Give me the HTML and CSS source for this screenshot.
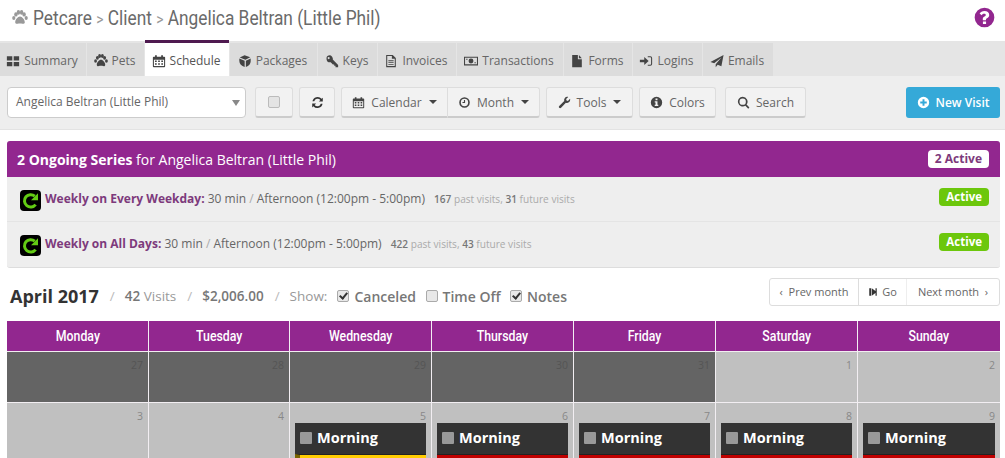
FILE: index.html
```html
<!DOCTYPE html>
<html lang="en">
<head>
    <meta charset="UTF-8">
    <meta name="viewport" content="width=device-width, initial-scale=1.0">
    <title>Petcare - Client Schedule</title>
    <link rel="stylesheet" href="styles.css">
</head>
<body>
    <svg class="sprite" width="0" height="0">
        <symbol id="i-paw" viewBox="0 0 16 16"><ellipse cx="3.9" cy="4.4" rx="1.7" ry="2.2"/><ellipse cx="12.1" cy="4.4" rx="1.7" ry="2.2"/><ellipse cx="6.4" cy="2.4" rx="1.7" ry="2.3"/><ellipse cx="9.6" cy="2.4" rx="1.7" ry="2.3"/><ellipse cx="1.8" cy="8" rx="1.6" ry="2"/><ellipse cx="14.200" cy="8" rx="1.6" ry="2"/><path d="M8 6.600c2.200 0 4.800 3.200 4.800 5.600 0 1.600-1.400 1.800-2.400 1.600-.8-.2-1.600-.4-2.400-.4s-1.600.2-2.400.4c-1 .2-2.400 0-2.400-1.600 0-2.400 2.600-5.600 4.800-5.600z"/></symbol>
        <symbol id="i-grid" viewBox="0 0 16 16"><path d="M1 2.500h6.200v5H1zM8.800 2.500H15v5H8.800zM1 9h6.200v5H1zM8.800 9H15v5H8.800z"/></symbol>
        <symbol id="i-cal" viewBox="0 0 16 16"><path fill-rule="evenodd" d="M2 3h1.500V1.500h2V3h5V1.500h2V3H14a1 1 0 0 1 1 1v10a1 1 0 0 1-1 1H2a1 1 0 0 1-1-1V4a1 1 0 0 1 1-1zm.200 3.500v7.300h11.600V6.500zM3.400 7.500h2v1.600h-2zM7 7.500h2v1.600H7zm3.600 0h2v1.600h-2zM3.400 10.500h2v1.800h-2zm3.600 0h2v1.800H7zm3.600 0h2v1.800h-2z"/></symbol>
        <symbol id="i-cube" viewBox="0 0 16 16"><path d="M7.500 1.500 14 3.800 8.500 6.500 2 4zM1.500 5.200 7.600 7.600V14.800C4 13.800 1.500 11.500 1.500 8zM9 7.600 14.500 5v3.200C14.500 11 12.500 13.600 9 14.800z"/></symbol>
        <symbol id="i-key" viewBox="0 0 16 16"><path fill-rule="evenodd" d="M5 1.500a4 4 0 0 1 3.900 4.900L15 12.500V15h-3v-1.500h-1.500V12H9L6.500 9.400A4 4 0 1 1 5 1.500zm-.800 2a1.200 1.200 0 1 0 0 2.400 1.200 1.200 0 0 0 0-2.400z"/></symbol>
        <symbol id="i-file-o" viewBox="0 0 16 16"><path fill-rule="evenodd" d="M2.500 1H10l3.500 3.500V15h-11zm1.200 1.200v11.600h8.600V5.500H9V2.200zM5 7.200h6v1H5zm0 2.200h6v1H5zm0 2.200h6v1H5z"/></symbol>
        <symbol id="i-money" viewBox="0 0 16 16"><path fill-rule="evenodd" d="M0 3h16v10H0zm1.200 1.200v7.600h13.600V4.200zM8 5.200a2.800 2.800 0 1 1 0 5.600 2.800 2.800 0 0 1 0-5.600zM2.500 5.500h1.500v1H2.500zm9.500 4h1.500v1H12z"/></symbol>
        <symbol id="i-file" viewBox="0 0 16 16"><path d="M2.500 1H9v5h4.500v9h-11zM10.200 1l3.300 3.800h-3.300z"/></symbol>
        <symbol id="i-login" viewBox="0 0 16 16"><path d="M1 6.500h5V3.500L11 8l-5 4.500v-3H1zM10 2.500h3a2 2 0 0 1 2 2v7a2 2 0 0 1-2 2h-3v-1.300h2.800a1 1 0 0 0 1-1V4.800a1 1 0 0 0-1-1H10z"/></symbol>
        <symbol id="i-send" viewBox="0 0 16 16"><path d="M15.500 1 13 14 8.800 12.300 6.500 15V11.800L13 4 4.800 10.700.5 9z"/></symbol>
        <symbol id="i-refresh" viewBox="0 0 16 16"><path d="M14.500 2v4.800H9.700l1.800-1.800A4.300 4.300 0 0 0 4 6.500H1.800A6.400 6.400 0 0 1 13 3.500zM1.500 14V9.200h4.800l-1.800 1.800A4.300 4.300 0 0 0 12 9.500h2.200A6.400 6.400 0 0 1 3 12.500z"/></symbol>
        <symbol id="i-clock" viewBox="0 0 16 16"><path fill-rule="evenodd" d="M8 1.500a6.500 6.500 0 1 1 0 13 6.500 6.500 0 0 1 0-13zm0 2a4.500 4.500 0 1 0 0 9 4.500 4.500 0 0 0 0-9zM7.300 5h1.400v3.700H5.500V7.500h1.800z"/></symbol>
        <symbol id="i-wrench" viewBox="0 0 16 16"><path d="M15 4.500a4 4 0 0 1-5.300 3.800L3.800 14.500a1.500 1.500 0 0 1-2.300-2.300L7.700 6.300A4 4 0 0 1 11.500 1c.4 0 .8 0 1.100.2L10 3.800l.5 1.700 1.700.5 2.600-2.600c.1.300.2.700.2 1.100z"/></symbol>
        <symbol id="i-info" viewBox="0 0 16 16"><path fill-rule="evenodd" d="M8 1a7 7 0 1 1 0 14A7 7 0 0 1 8 1zM6.800 3.200v2h2.400v-2zM5.800 6.500v1.400h1v2.900h-1v1.400h4.400v-1.400h-1V6.500z"/></symbol>
        <symbol id="i-search" viewBox="0 0 16 16"><path fill-rule="evenodd" d="M7 1a6 6 0 0 1 4.800 9.600l3.500 3.500-1.500 1.500-3.500-3.500A6 6 0 1 1 7 1zm0 2.100a3.900 3.900 0 1 0 0 7.800 3.900 3.900 0 0 0 0-7.800z"/></symbol>
        <symbol id="i-plus" viewBox="0 0 16 16"><path fill-rule="evenodd" d="M8 1a7 7 0 1 1 0 14A7 7 0 0 1 8 1zM6.800 4v2.800H4v2.400h2.800V12h2.400V9.200H12V6.800H9.200V4z"/></symbol>
        <symbol id="i-help" viewBox="0 0 16 16"><path fill-rule="evenodd" d="M8 .5a7.500 7.500 0 1 1 0 15 7.500 7.500 0 0 1 0-15zM6.800 11v2h2.400v-2zM8 3C6.300 3 5 3.800 4.300 5l1.500 1.200c.5-.7 1-1.100 1.900-1.100.8 0 1.300.4 1.300 1 0 .5-.4.800-1 1.200-.9.500-1.300 1.100-1.300 2v.7h2.400v-.5c0-.4.200-.6.800-1 .9-.5 1.700-1.200 1.700-2.500C11.600 4.200 10 3 8 3z"/></symbol>
        <symbol id="i-go" viewBox="0 0 16 16"><path d="M2 2h3v12H2zM6 2l8 6-8 6zM12 2h2v12h-2z"/></symbol>
        <symbol id="i-series" viewBox="0 0 21 21"><rect width="21" height="21" rx="4" fill="#000"/><path d="M15.600 14.600A6.200 6.200 0 1 1 14.800 6.200" fill="none" stroke="#63cc14" stroke-width="3"/><path d="M18 3.200V10.200H11z" fill="#63cc14"/></symbol>
    </svg>

    <!-- Title -->
    <header class="title-row">
        <h1 class="title">
            <svg class="title-paw"><use href="#i-paw"/></svg>
            <span class="title-text">Petcare <span class="crumb-sep">&gt;</span> Client <span class="crumb-sep">&gt;</span> Angelica Beltran (Little Phil)</span>
        </h1>
        <svg class="help-icon"><use href="#i-help"/></svg>
    </header>

    <!-- Tabs -->
    <nav class="tabs">
        <a class="tab tab-summary"><svg class="icon"><use href="#i-grid"/></svg>Summary</a>
        <a class="tab tab-pets"><svg class="icon"><use href="#i-paw"/></svg>Pets</a>
        <a class="tab tab-schedule active"><svg class="icon"><use href="#i-cal"/></svg>Schedule</a>
        <a class="tab tab-packages"><svg class="icon"><use href="#i-cube"/></svg>Packages</a>
        <a class="tab tab-keys"><svg class="icon"><use href="#i-key"/></svg>Keys</a>
        <a class="tab tab-invoices"><svg class="icon"><use href="#i-file-o"/></svg>Invoices</a>
        <a class="tab tab-transactions"><svg class="icon"><use href="#i-money"/></svg>Transactions</a>
        <a class="tab tab-forms"><svg class="icon"><use href="#i-file"/></svg>Forms</a>
        <a class="tab tab-logins"><svg class="icon"><use href="#i-login"/></svg>Logins</a>
        <a class="tab tab-emails"><svg class="icon"><use href="#i-send"/></svg>Emails</a>
    </nav>

    <!-- Toolbar -->
    <div class="toolbar">
        <div class="client-select">Angelica Beltran (Little Phil)<span class="select-arrow"></span></div>
        <button class="btn btn-check"><span class="fake-check"></span></button>
        <button class="btn btn-refresh"><svg class="icon dark"><use href="#i-refresh"/></svg></button>
        <div class="btn-group">
            <button class="btn btn-calendar"><svg class="icon"><use href="#i-cal"/></svg>Calendar<span class="caret"></span></button>
            <button class="btn btn-month"><svg class="icon"><use href="#i-clock"/></svg>Month<span class="caret"></span></button>
        </div>
        <button class="btn btn-tools"><svg class="icon"><use href="#i-wrench"/></svg>Tools<span class="caret"></span></button>
        <button class="btn btn-colors"><svg class="icon"><use href="#i-info"/></svg>Colors</button>
        <button class="btn btn-search"><svg class="icon"><use href="#i-search"/></svg>Search</button>
        <button class="btn-new"><svg class="icon"><use href="#i-plus"/></svg>New Visit</button>
    </div>

    <!-- Ongoing series -->
    <section class="series">
        <div class="series-head">
            <div><b>2 Ongoing Series</b> for Angelica Beltran (Little Phil)</div>
            <span class="count-badge">2 Active</span>
        </div>
        <div class="series-row">
            <svg class="series-icon"><use href="#i-series"/></svg>
            <div class="series-text">
                <b>Weekly on Every Weekday:</b> 30 min <i>/</i> Afternoon (12:00pm - 5:00pm)
                <small><b>167</b> past visits, <b>31</b> future visits</small>
            </div>
            <span class="active-badge">Active</span>
        </div>
        <div class="series-row">
            <svg class="series-icon"><use href="#i-series"/></svg>
            <div class="series-text">
                <b>Weekly on All Days:</b> 30 min <i>/</i> Afternoon (12:00pm - 5:00pm)
                <small><b>422</b> past visits, <b>43</b> future visits</small>
            </div>
            <span class="active-badge">Active</span>
        </div>
    </section>

    <!-- Month summary -->
    <div class="month-row">
        <div class="month-info">
            <h2>April 2017</h2>
            <i>/</i>
            <span><b>42</b> Visits</span>
            <i>/</i>
            <b>$2,006.00</b>
            <i>/</i>
            <span>Show:</span>
            <label><span class="check on"></span>Canceled</label>
            <label><span class="check"></span>Time Off</label>
            <label><span class="check on"></span>Notes</label>
        </div>
        <div class="pager">
            <a class="pager-prev">&lsaquo;&nbsp; Prev month</a>
            <a class="pager-go"><svg class="icon dark"><use href="#i-go"/></svg>Go</a>
            <a class="pager-next">Next month &nbsp;&rsaquo;</a>
        </div>
    </div>

    <!-- Calendar -->
    <div class="calendar">
        <div class="dow"><span>Monday</span></div>
        <div class="dow"><span>Tuesday</span></div>
        <div class="dow"><span>Wednesday</span></div>
        <div class="dow"><span>Thursday</span></div>
        <div class="dow"><span>Friday</span></div>
        <div class="dow"><span>Saturday</span></div>
        <div class="dow"><span>Sunday</span></div>

        <div class="day past"><span class="num">27</span></div>
        <div class="day past"><span class="num">28</span></div>
        <div class="day past"><span class="num">29</span></div>
        <div class="day past"><span class="num">30</span></div>
        <div class="day past"><span class="num">31</span></div>
        <div class="day"><span class="num">1</span></div>
        <div class="day"><span class="num">2</span></div>

        <div class="day week2"><span class="num">3</span></div>
        <div class="day week2"><span class="num">4</span></div>
        <div class="day week2"><span class="num">5</span>
            <div class="visit"><div class="visit-head"><span class="visit-check"></span>Morning</div><div class="visit-body yellow"></div></div>
        </div>
        <div class="day week2"><span class="num">6</span>
            <div class="visit"><div class="visit-head"><span class="visit-check"></span>Morning</div><div class="visit-body"></div></div>
        </div>
        <div class="day week2"><span class="num">7</span>
            <div class="visit"><div class="visit-head"><span class="visit-check"></span>Morning</div><div class="visit-body"></div></div>
        </div>
        <div class="day week2"><span class="num">8</span>
            <div class="visit"><div class="visit-head"><span class="visit-check"></span>Morning</div><div class="visit-body"></div></div>
        </div>
        <div class="day week2"><span class="num">9</span>
            <div class="visit"><div class="visit-head"><span class="visit-check"></span>Morning</div><div class="visit-body"></div></div>
        </div>
    </div>
</body>
</html>
```

FILE: styles.css
```css
/* Page */
html, body {
    height: 100%;
    margin: 0;
    overflow: hidden;
}
body {
    background-color: white;
    color: #555;
    font-family: "Open Sans", Arial, sans-serif;
    font-size: 12px;
}
.sprite {
    position: absolute;
}
.icon {
    width: 13px;
    height: 13px;
    margin-right: 6px;
    fill: #444;
    flex: none;
}
.icon.dark {
    fill: #333;
}

/* Title */
.title-row {
    display: flex;
    align-items: center;
    justify-content: space-between;
    height: 35px;
    padding: 0 10px 6px 12px;
}
.title {
    display: flex;
    align-items: center;
    gap: 5px;
    margin: 0;
    color: #6a6a6a;
    font-family: Roboto, sans-serif;
    font-size: 20px;
    font-weight: normal;
    white-space: nowrap;
}
.title-text {
    display: inline-block;
    transform: scaleX(0.865);
    transform-origin: left center;
}
.title-paw {
    width: 16px;
    height: 16px;
    fill: #999;
}
.crumb-sep {
    color: #999;
    font-size: 16px;
}
.help-icon {
    width: 21px;
    height: 21px;
    fill: #92278f;
}

/* Tabs */
.tabs {
    display: flex;
    height: 35px;
    background-color: #e5e5e5;
}
.tab {
    display: flex;
    align-items: center;
    justify-content: center;
    box-sizing: border-box;
    height: 33px;
    margin: 2px 1px 0 0;
    padding: 2px 2px 0 0;
    background-color: #dcdcdc;
    color: #666;
}
.tab .icon {
    width: 14px;
    height: 14px;
    margin-right: 4px;
}
.tab.active {
    height: 36px;
    margin-top: -1px;
    border-top: 3px solid #4f1a50;
    background-color: white;
    color: #555;
}
.tab-summary { width: 86px; }
.tab-pets { width: 57px; }
.tab-schedule { width: 84px; }
.tab-packages { width: 87px; }
.tab-keys { width: 59px; }
.tab-invoices { width: 78px; }
.tab-transactions { width: 106px; }
.tab-forms { width: 68px; }
.tab-logins { width: 69px; }
.tab-emails { width: 70px; }

/* Toolbar */
.toolbar {
    display: flex;
    align-items: center;
    height: 53px;
    padding: 0 5px 0 7px;
    background-color: #eee;
    border-bottom: 1px solid #e3e3e3;
}
.client-select {
    position: relative;
    width: 229px;
    height: 29px;
    padding-left: 8px;
    border: 1px solid #ccc;
    border-radius: 4px;
    background-color: white;
    color: #666;
    line-height: 28px;
}
.select-arrow {
    position: absolute;
    top: 12px;
    right: 5px;
    border-top: 6px solid #888;
    border-left: 4px solid transparent;
    border-right: 4px solid transparent;
}
.btn {
    display: flex;
    align-items: center;
    justify-content: center;
    height: 31px;
    padding: 0;
    border: 1px solid #ddd;
    border-bottom: 2px solid #ccc;
    border-radius: 3px;
    background-color: #f2f2f2;
    color: #666;
    font-family: inherit;
    font-size: 12px;
}
.btn-check { width: 38px; margin-left: 9px; }
.btn-refresh { width: 36px; margin-left: 6px; }
.btn-group { display: flex; margin-left: 6px; }
.btn-calendar { width: 106px; border-radius: 3px 0 0 3px; border-right: 0; }
.btn-month { width: 93px; border-radius: 0 3px 3px 0; }
.btn-tools { width: 87px; margin-left: 6px; }
.btn-colors { width: 77px; margin-left: 6px; }
.btn-search { width: 81px; margin-left: 9px; }
.btn-refresh .icon { margin: 0; }
.fake-check {
    width: 10px;
    height: 10px;
    border: 1px solid #bbb;
    border-radius: 2px;
    background-color: #e4e4e4;
}
.caret {
    margin-left: 7px;
    border-top: 4px solid #444;
    border-left: 4px solid transparent;
    border-right: 4px solid transparent;
}
.btn-new {
    display: flex;
    align-items: center;
    justify-content: center;
    width: 94px;
    height: 31px;
    margin-left: auto;
    padding: 0;
    border: 0;
    border-radius: 3px;
    background-color: #35a9d8;
    color: white;
    font-family: inherit;
    font-size: 12px;
    font-weight: 600;
}
.btn-new .icon {
    fill: white;
}

/* Ongoing series */
.series {
    margin: 11px 5px 0 7px;
    border-bottom: 1px solid #ddd;
    border-radius: 3px;
    background-color: #eee;
}
.series-head {
    display: flex;
    align-items: center;
    justify-content: space-between;
    height: 36px;
    padding: 0 11px 0 10px;
    border-radius: 3px 3px 0 0;
    background-color: #92278f;
    color: white;
    font-size: 14px;
}
.count-badge {
    padding: 0 7px;
    border-radius: 4px;
    background-color: white;
    color: #7d3a7c;
    font-size: 12px;
    font-weight: 700;
    line-height: 18px;
}
.series-row {
    display: flex;
    align-items: flex-start;
    height: 45px;
    padding: 0 11px 0 13px;
    box-sizing: border-box;
    border-bottom: 1px solid #e4e4e4;
}
.series-row:last-child {
    border-bottom: 0;
}
.series-icon {
    width: 21px;
    height: 21px;
    margin-top: 13px;
}
.series-text {
    margin: 13px 0 0 4px;
    color: #666;
    line-height: 18px;
}
.series-text b {
    color: #7d3a7c;
}
.series-text i {
    color: #aaa;
    font-style: normal;
}
.series-text small {
    margin-left: 6px;
    color: #aaa;
    font-size: 10.1px;
}
.series-text small b {
    color: #777;
    font-weight: 600;
}
.active-badge {
    margin: 11px 0 0 auto;
    padding: 0 7px;
    border-radius: 4px;
    background-color: #6cc70c;
    color: white;
    font-size: 11.5px;
    font-weight: 700;
    line-height: 18px;
}

/* Month summary */
.month-row {
    display: flex;
    align-items: flex-start;
    justify-content: space-between;
    height: 53px;
    margin: 0 5px 0 8px;
}
.month-info {
    display: flex;
    align-items: center;
    gap: 10px;
    height: 24px;
    margin-top: 16px;
    color: #999;
    font-size: 13.5px;
}
.month-info h2 {
    margin: 0 0 0 2px;
    color: #333;
    font-size: 18px;
    font-weight: 700;
}
.month-info i {
    margin-left: 1px;
    color: #bbb;
    font-style: normal;
}
.month-info b {
    color: #777;
    font-weight: 600;
}
.month-info label {
    display: flex;
    align-items: center;
    margin-right: -0.5px;
    color: #777;
    font-size: 14px;
    font-weight: 600;
}
.check {
    display: flex;
    align-items: center;
    justify-content: center;
    width: 10px;
    height: 10px;
    margin-right: 5px;
    border: 1px solid #aaa;
    border-radius: 2px;
    background-color: #e8e8e8;
}
.check.on::after {
    content: "";
    width: 3px;
    height: 6px;
    margin-top: -2px;
    border-right: 2px solid #333;
    border-bottom: 2px solid #333;
    transform: rotate(40deg);
}
.pager {
    display: flex;
    height: 26px;
    margin-top: 10px;
    border: 1px solid #ddd;
    border-radius: 3px;
    color: #666;
    font-size: 11px;
    line-height: 26px;
}
.pager a {
    display: flex;
    align-items: center;
    justify-content: center;
}
.pager .icon {
    width: 10px;
    height: 10px;
    margin-right: 4px;
}
.pager-prev { width: 88px; border-right: 1px solid #ddd; }
.pager-go { width: 47px; border-right: 1px solid #eee; }
.pager-next { width: 92px; }

/* Calendar */
.calendar {
    display: grid;
    grid-template-columns: 141px 140px 141px 141px 141px 141px 142px;
    gap: 1px;
    margin: 0 5px 0 7px;
    background-color: #f2eef2;
}
.dow {
    height: 30px;
    background-color: #92278f;
    color: white;
    font-family: Roboto, sans-serif;
    font-size: 15px;
    font-weight: 500;
    line-height: 30px;
    text-align: center;
}
.dow span {
    display: inline-block;
    transform: scaleX(0.82);
}
.day {
    height: 50px;
    padding: 6px 5px 0;
    box-sizing: border-box;
    background-color: #c0c0c0;
    text-align: right;
}
.day.past {
    background-color: #646464;
}
.day.week2 {
    height: 55px;
    overflow: hidden;
}
.num {
    display: block;
    color: #888;
    font-size: 10.5px;
    line-height: 14px;
}
.day.past .num {
    color: #555;
}
.visit {
    text-align: left;
}
.visit-head {
    display: flex;
    align-items: center;
    box-sizing: border-box;
    height: 31px;
    padding: 0 0 2px 5px;
    background-color: #333;
    color: white;
    font-size: 14.5px;
    font-weight: 700;
}
.visit-check {
    width: 12px;
    height: 12px;
    margin-right: 5px;
    border-radius: 1px;
    background-color: #999;
}
.visit-body {
    height: 4px;
    border-top: 1px solid #222;
    background-color: #c00000;
}
.visit-body.yellow {
    border-left: 5px solid #7a6400;
    background-color: #ffcc00;
}
```
